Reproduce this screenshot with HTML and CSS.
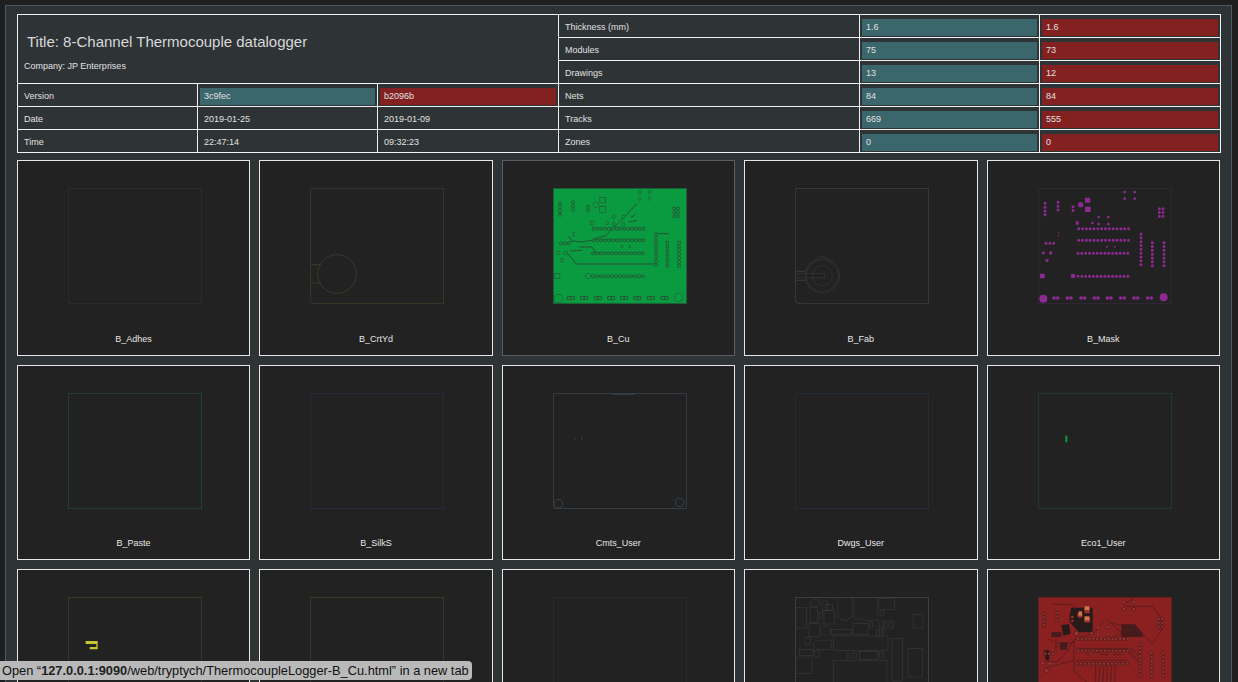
FILE: index.html
```html
<!DOCTYPE html>
<html lang="en">
<head>
<meta charset="utf-8">
<title>8-Channel Thermocouple datalogger</title>
<link rel="stylesheet" href="styles.css">
</head>
<body>
<svg class="defs" width="0" height="0" aria-hidden="true">
  <defs>
    <g id="pads">
      <path class="dots" d="M162 162H313M162 197H313M160 236H311M160 305H311M349 178V281M383 204V274M418 204V274M61 86V122M100 83V107M145 96V108M64 206H88M404 102V127M415 102V127"/>
      <circle class="pad" cx="300" cy="52" r="4"/><circle class="pad" cx="330" cy="52" r="4"/>
      <circle class="pad" cx="300" cy="72" r="4"/><circle class="pad" cx="330" cy="72" r="4"/>
      <circle class="pad" cx="168" cy="90" r="8"/>
      <rect class="pad" x="181" y="69" width="16" height="15"/><rect class="pad" x="181" y="96" width="17" height="16"/>
      <circle class="pad" cx="222" cy="127" r="4"/><circle class="pad" cx="251" cy="127" r="4"/>
      <circle class="pad" cx="203" cy="145" r="4"/><circle class="pad" cx="222" cy="148" r="4"/><circle class="pad" cx="251" cy="148" r="4"/>
      <rect class="pad" x="153" y="140" width="9" height="10"/>
      <circle class="pad" cx="56" cy="235" r="4.5"/><circle class="pad" cx="78" cy="235" r="5"/><circle class="pad" cx="67" cy="257" r="5"/>
      <rect class="pad" x="46" y="297" width="14" height="14"/>
      <circle class="pad" cx="145" cy="304" r="7"/>
      <circle class="pad" cx="56" cy="372" r="12"/><circle class="pad" cx="417" cy="368" r="12"/>
      <circle class="pad" cx="247" cy="216" r="3"/><circle class="pad" cx="270" cy="216" r="3"/>
      <circle class="pad" cx="102" cy="174" r="2"/><circle class="pad" cx="102" cy="183" r="2"/>
      <path class="pairs" d="M88 370H99.5M128 370H139.5M169 370H180.5M209 370H220.5M248 370H259.5M288 370H299.5M328 370H339.5M369 370H380.5"/>
    </g>
  </defs>
</svg>
<main class="page">
  <table class="summary">
    <colgroup>
      <col class="w180"><col class="w180"><col class="w181"><col class="w301"><col class="w180"><col class="w181">
    </colgroup>
    <tbody>
      <tr>
        <td class="head" colspan="3" rowspan="3">
          <h1 class="title">Title: 8-Channel Thermocouple datalogger</h1>
          <p class="company">Company: JP Enterprises</p>
        </td>
        <td>Thickness (mm)</td>
        <td class="barcell"><span class="bar new">1.6</span></td>
        <td class="barcell"><span class="bar old">1.6</span></td>
      </tr>
      <tr>
        <td>Modules</td>
        <td class="barcell"><span class="bar new">75</span></td>
        <td class="barcell"><span class="bar old">73</span></td>
      </tr>
      <tr>
        <td>Drawings</td>
        <td class="barcell"><span class="bar new">13</span></td>
        <td class="barcell"><span class="bar old">12</span></td>
      </tr>
      <tr>
        <td>Version</td>
        <td class="barcell"><span class="bar new">3c9fec</span></td>
        <td class="barcell"><span class="bar old">b2096b</span></td>
        <td>Nets</td>
        <td class="barcell"><span class="bar new">84</span></td>
        <td class="barcell"><span class="bar old">84</span></td>
      </tr>
      <tr>
        <td>Date</td>
        <td>2019-01-25</td>
        <td>2019-01-09</td>
        <td>Tracks</td>
        <td class="barcell"><span class="bar new">669</span></td>
        <td class="barcell"><span class="bar old">555</span></td>
      </tr>
      <tr>
        <td>Time</td>
        <td>22:47:14</td>
        <td>09:32:23</td>
        <td>Zones</td>
        <td class="barcell"><span class="bar new">0</span></td>
        <td class="barcell"><span class="bar old">0</span></td>
      </tr>
    </tbody>
  </table>

  <section class="cards">
    <a class="card" href="#">
      <svg class="board" viewBox="40 40 402 348"><rect class="edge adhes" x="41" y="41" width="400" height="346"/></svg>
      <span class="label">B_Adhes</span>
    </a>
    <a class="card" href="#">
      <svg class="board" viewBox="40 40 402 348">
        <path class="edge crtyd" d="M41 270V372Q41 387 56 387H441V41H41V270H72M41 325H72"/>
        <circle class="edge crtyd" cx="121" cy="298" r="58"/>
      </svg>
      <span class="label">B_CrtYd</span>
    </a>
    <a class="card hovered" href="#">
      <svg class="board" viewBox="40 40 402 348">
        <rect class="green-fill" x="41" y="41" width="400" height="346"/>
        <path class="green-trace" d="M292 87L247 134L227 154L197 184L172 189L162 196L122 202L97 199L87 184M162 196H312M82 234L110 268H347M90 229L127 227M120 217H157L167 231M352 177H387M267 142L292 137M274 129L287 119M95 200L82 206"/>
        <use href="#pads" class="pads-green-ring"/>
        <use href="#pads" class="pads-green-core"/>
      </svg>
      <span class="label">B_Cu</span>
    </a>
    <a class="card" href="#">
      <svg class="board" viewBox="40 40 402 348">
        <path class="edge fab" d="M41 290V372Q41 387 56 387H441V41H41V290H70M41 317H70"/>
        <circle class="thin fab" cx="122" cy="303" r="52"/>
        <circle class="thin fab" cx="122" cy="303" r="48"/>
        <circle class="thin fab" cx="122" cy="303" r="30"/>
        <rect class="thin fab" x="46" y="297" width="84" height="13"/>
        <path class="thin fab" d="M108 245H132"/>
      </svg>
      <span class="label">B_Fab</span>
    </a>
    <a class="card" href="#">
      <svg class="board" viewBox="40 40 402 348">
        <rect class="edge mask" x="41" y="41" width="400" height="346"/>
        <use href="#pads" class="pads-mask"/>
      </svg>
      <span class="label">B_Mask</span>
    </a>

    <a class="card" href="#">
      <svg class="board" viewBox="40 40 402 348"><rect class="edge paste" x="41" y="41" width="400" height="346"/></svg>
      <span class="label">B_Paste</span>
    </a>
    <a class="card" href="#">
      <svg class="board" viewBox="40 40 402 348"><rect class="edge silk" x="41" y="41" width="400" height="346"/></svg>
      <span class="label">B_SilkS</span>
    </a>
    <a class="card" href="#">
      <svg class="board" viewBox="40 40 402 348">
        <rect class="edge cmts" x="41" y="41" width="400" height="346" rx="4"/>
        <circle class="edge cmts" cx="56" cy="372" r="13"/>
        <circle class="edge cmts" cx="420" cy="368" r="13"/>
        <path class="edge cmts" d="M215 44H285M103 177H109M127 172V182"/>
      </svg>
      <span class="label">Cmts_User</span>
    </a>
    <a class="card" href="#">
      <svg class="board" viewBox="40 40 402 348"><rect class="edge dwgs" x="41" y="41" width="400" height="346"/></svg>
      <span class="label">Dwgs_User</span>
    </a>
    <a class="card" href="#">
      <svg class="board" viewBox="40 40 402 348">
        <rect class="edge eco1" x="41" y="41" width="400" height="346"/>
        <rect class="eco1-mark" x="122" y="168" width="6" height="20"/>
      </svg>
      <span class="label">Eco1_User</span>
    </a>

    <a class="card" href="#">
      <svg class="board" viewBox="40 40 402 348">
        <rect class="edge eco2" x="41" y="41" width="400" height="346"/>
        <path class="eco2-mark" d="M93 172H129V197H105V190H125V181H93Z"/>
      </svg>
    </a>
    <a class="card" href="#">
      <svg class="board" viewBox="40 40 402 348"><rect class="edge eco2" x="41" y="41" width="400" height="346"/></svg>
    </a>
    <a class="card" href="#">
      <svg class="board" viewBox="40 40 402 348"><rect class="edge adhes" x="41" y="41" width="400" height="346"/></svg>
    </a>
    <a class="card" href="#">
      <svg class="board" viewBox="40 40 402 348">
        <rect class="edge courtyard" x="41" y="41" width="400" height="346"/>
        <g class="courtyard-parts" transform="translate(9 5)">
          <rect x="34" y="67" width="31" height="61"/><rect x="76" y="65" width="22" height="47"/>
          <rect x="73" y="115" width="33" height="39"/>
          <path d="M82 42H98L106 50V58L98 65H82L76 58V50Z"/>
          <rect x="112" y="47" width="16" height="28"/><rect x="122" y="58" width="21" height="17"/>
          <rect x="118" y="75" width="31" height="41"/><rect x="105" y="82" width="9" height="16"/>
          <path d="M160 35H203V95L190 100V105H175L160 95H152M160 35V95"/>
          <path d="M208 35H278V105H235L230 101H215L208 102Z"/>
          <rect x="283" y="40" width="46" height="33"/><rect x="286" y="77" width="10" height="15"/>
          <rect x="385" y="88" width="30" height="40"/><rect x="141" y="133" width="60" height="14"/>
          <rect x="205" y="115" width="45" height="33"/><rect x="254" y="110" width="9" height="16"/>
          <rect x="283" y="107" width="12" height="21"/><rect x="300" y="107" width="10" height="21"/>
          <rect x="316" y="107" width="10" height="21"/><rect x="275" y="133" width="9" height="17"/>
          <rect x="290" y="133" width="7" height="17"/>
          <path d="M115 122H130L137 130V142L130 150H115L108 142V130Z"/>
          <rect x="146" y="152" width="164" height="44"/><rect x="322" y="160" width="31" height="127"/>
          <rect x="370" y="190" width="43" height="85"/><rect x="61" y="157" width="16" height="21"/>
          <path d="M100 166H140V193H100L86 180V174L92 168Z"/>
          <rect x="45" y="193" width="41" height="17"/><rect x="88" y="196" width="16" height="19"/>
          <rect x="34" y="215" width="48" height="50"/><rect x="187" y="205" width="7" height="15"/>
          <rect x="205" y="203" width="10" height="15"/><rect x="224" y="199" width="54" height="24"/>
          <rect x="285" y="202" width="11" height="16"/><rect x="146" y="226" width="161" height="110"/>
        </g>
      </svg>
    </a>
    <a class="card" href="#">
      <svg class="board" viewBox="40 40 402 348">
        <rect class="red-fill" x="41" y="41" width="400" height="346"/>
        <g transform="translate(-2 4)">
          <path class="red-pour" d="M142 68H206V142H165L150 125L137 110V90Z"/>
          <path class="red-pour-soft" d="M292 118H332L356 143V156H292Z"/>
          <path class="red-pour" d="M60 196H76V225H66ZM112 120L135 118L140 146L118 152Z"/>
          <path class="red-pour-soft" d="M108 172H130V194H108ZM82 142H112V156H82Z"/>
          <path class="red-trace" d="M300 64H385L412 100L416 130L385 178L350 140L262 112M245 100L300 150M238 112L210 144L150 165V258L192 295M150 165L130 200L100 230H66L60 200M310 190L352 232M322 190L352 218M300 190L352 240M215 226V295M228 240L224 295M240 240L236 295M250 240L248 295M262 240L260 295M274 240L272 295M160 226H310M160 190H310M60 80L64 130M85 58H140L160 80M296 60L330 38M250 165L300 140M96 162L96 200M70 160L90 172M122 180L150 170M65 250L150 225M186 205L200 215M225 208H255M270 208H300"/>
          <use href="#pads" class="pads-red-ring"/>
          <use href="#pads" class="pads-red-core"/>
          <rect class="red-hot" x="182" y="64" width="14" height="11"/>
          <rect class="red-hot" x="164" y="79" width="10" height="13"/>
          <rect class="red-hot" x="182" y="94" width="14" height="12"/>
        </g>
      </svg>
    </a>
  </section>
</main>
<div class="status">Open “<b class="status-host">127.0.0.1:9090</b>/web/tryptych/ThermocoupleLogger-B_Cu.html” in a new tab</div>
</body>
</html>
```

FILE: styles.css
```css
* { box-sizing: border-box; }

html, body {
  margin: 0;
  height: 100%;
  overflow: hidden;
}

body {
  background: #1f1f1f;
  color: #e0e0e0;
  font-family: "Liberation Sans", Arial, sans-serif;
  font-size: 9px;
}

.defs { display: block; width: 0; height: 0; }

.page {
  margin: 5px 6px 0 5px;
  padding: 8px 10px 20px 11px;
  background: #2e3436;
  border: 1px solid #4a5a63;
  border-bottom: 0;
}

.summary {
  width: 1204px;
  table-layout: fixed;
  border-collapse: collapse;
}

.w180 { width: 180px; }
.w181 { width: 181px; }
.w301 { width: 301px; }

.summary td {
  height: 23px;
  padding: 2px 6px 0;
  border: 1px solid #f2f2f2;
  line-height: 11px;
}

.summary td.barcell { padding: 3px 2px 0; }

.summary td.head { padding: 0 6px; vertical-align: top; }

.title {
  margin: 19px 0 0 3px;
  font-size: 15px;
  font-weight: 400;
  line-height: 16px;
  color: #d8d8d8;
}

.company {
  margin: 11px 0 0;
  line-height: 11px;
}

.bar {
  display: block;
  height: 17px;
  padding-left: 4px;
  line-height: 17px;
}

.new { background: #3b666b; }
.old { background: #832121; }

.cards {
  display: grid;
  grid-template-columns: repeat(5, 233.3px);
  column-gap: 9.2px;
  row-gap: 9px;
  margin: 7px 0 0 -0.25px;
}

.card {
  display: block;
  height: 195.5px;
  padding-top: 27px;
  background: #222222;
  border: 1px solid #e6e6e6;
  color: #e6e6e6;
  text-decoration: none;
}

.card.hovered { border-color: #5a5f60; }

.board {
  display: block;
  width: 134px;
  height: 116px;
  margin-left: 50px;
}

.label {
  display: block;
  margin-top: 29.5px;
  line-height: 11px;
  text-align: center;
}

.edge, .thin { fill: none; stroke-width: 2.4; }
.thin { stroke-width: 1.2; }
.adhes { stroke: #2f2f2c; }
.crtyd { stroke: #3f3f2c; }
.fab { stroke: #434343; }
.mask { stroke: #3a263d; }
.paste { stroke: #234a3c; }
.silk { stroke: #282c48; }
.cmts { stroke: #3b4754; }
.dwgs { stroke: #233240; }
.eco1 { stroke: #1f4230; }
.eco2 { stroke: #40402a; }
.courtyard { stroke: #484848; }

.courtyard-parts { fill: none; stroke: #3f3f3f; stroke-width: 1.5; }

.eco1-mark { fill: #0e9a3c; }
.eco2-mark { fill: #c6c832; }

.green-fill { fill: #0a9a40; stroke: #2b4d36; stroke-width: 1.5; }
.green-trace { fill: none; stroke: #27452f; stroke-width: 2.4; }

.red-fill { fill: #8a2020; }
.red-pour { fill: #261a1a; }
.red-pour-soft { fill: #451b1b; }
.red-trace { fill: none; stroke: #4a1c1c; stroke-width: 2.2; }
.red-hot { fill: #cf7a45; }

.pads-green-ring { --pad: #2b4a33; --dot: 11px; --grow: 3px; --pair: 14px; }
.pads-green-core { --pad: #0a9a40; --dot: 7px; --grow: 0px; --pair: 9px; }
.pads-mask { --pad: #8d2a92; --dot: 9px; --grow: 0px; --pair: 11px; }
.pads-red-ring { --pad: #4a1c1c; --dot: 11px; --grow: 3px; --pair: 13px; }
.pads-red-core { --pad: #983434; --dot: 7px; --grow: 0px; --pair: 8px; }

.dots {
  fill: none;
  stroke: var(--pad);
  stroke-width: var(--dot);
  stroke-dasharray: 0 11.5;
  stroke-linecap: round;
}

.pairs {
  fill: none;
  stroke: var(--pad);
  stroke-width: var(--pair);
  stroke-dasharray: 0 11;
  stroke-linecap: round;
}

.pad {
  fill: var(--pad);
  stroke: var(--pad);
  stroke-width: var(--grow);
}

.status {
  position: fixed;
  left: 0;
  bottom: 2px;
  height: 19px;
  padding: 0 3px 0 2px;
  background: #b9b9b9;
  color: #111111;
  font-size: 12.8px;
  line-height: 19px;
  border-radius: 0 4px 4px 0;
  white-space: nowrap;
}

.status-host { font-weight: 700; color: #222222; }
```
